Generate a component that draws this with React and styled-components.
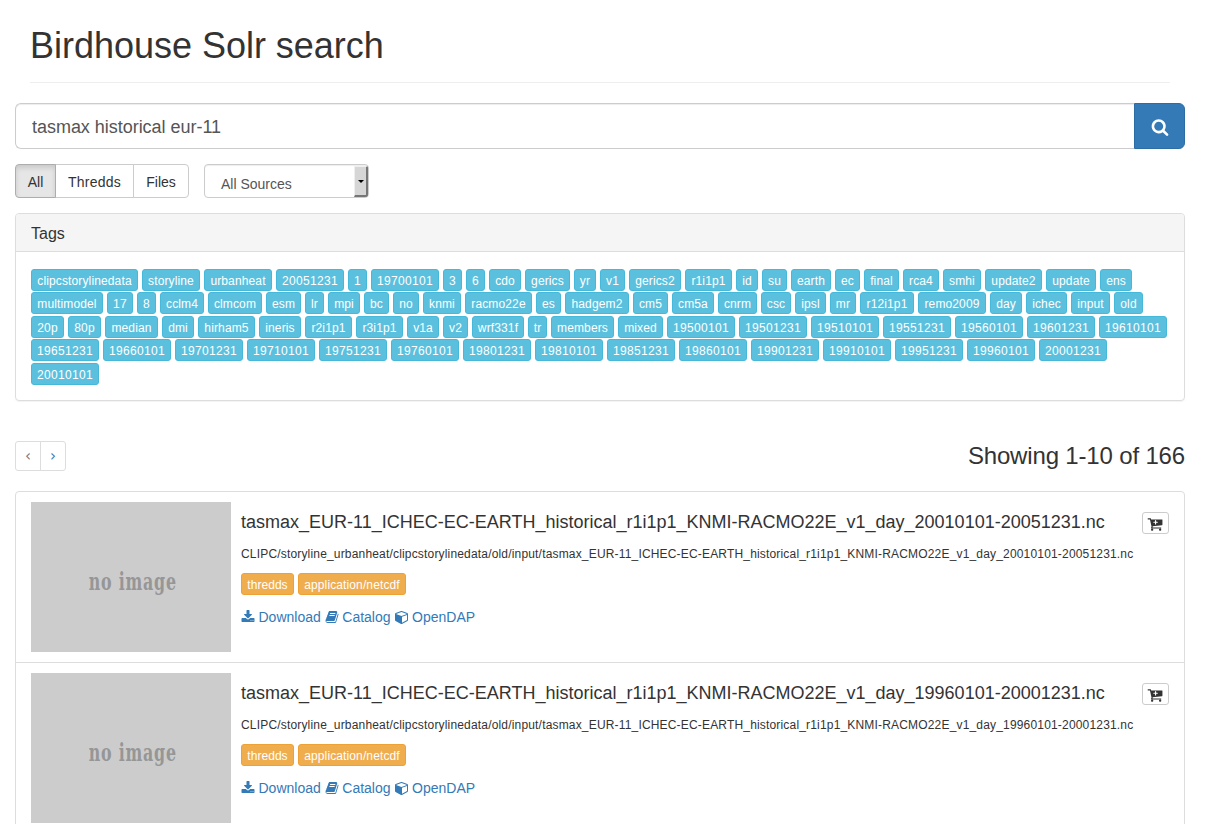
import React from "react";
import styled, { createGlobalStyle } from "styled-components";

const Global = createGlobalStyle`
  * { box-sizing: border-box; }
  body { margin: 0; background: #fff; color: #333; font: 14px/20px "Liberation Sans", Arial, sans-serif; height: 824px; overflow: hidden; }
`;
const Page = styled.main`width: 1200px; padding: 0 15px;`;
const Header = styled.header`margin: 0 15px 20px; height: 83px; padding-top: 26px; border-bottom: 1px solid #eee;`;
const Title = styled.h1`margin: 0; font-size: 36px; line-height: 40px; font-weight: 500; letter-spacing: -.02px;`;
const SearchBar = styled.form`display: flex; height: 46px;`;
const SearchInput = styled.input`
  flex: 1; min-width: 0; padding: 11px 16px 9px; border: 1px solid #ccc; border-right: 0; border-radius: 6px 0 0 6px;
  font: 18px "Liberation Sans", Arial, sans-serif; letter-spacing: -.03px; color: #555; box-shadow: inset 0 1px 1px rgba(0,0,0,.075); outline: 0;
`;
const SearchButton = styled.button`
  width: 51px; padding: 1px 0 0; border: 1px solid #2e6da4; border-radius: 0 6px 6px 0; background: #337ab7; color: #fff;
  display: flex; align-items: center; justify-content: center;
`;
const Filters = styled.div`display: flex; gap: 15px; margin: 15px 0;`;
const Segments = styled.div`display: flex; height: 34px;`;
const Segment = styled.button`
  width: ${p => p.$w}px; margin-left: -1px; padding: 2px 0 0; font: inherit; color: #333; letter-spacing: ${p => p.$tracking || 0}px;
  border: 1px solid ${p => (p.$active ? "#adadad" : "#ccc")}; background: ${p => (p.$active ? "#e6e6e6" : "#fff")};
  box-shadow: ${p => (p.$active ? "inset 0 3px 5px rgba(0,0,0,.125)" : "none")}; position: relative; z-index: ${p => (p.$active ? 1 : 0)};
  &:first-child { margin-left: 0; border-radius: 4px 0 0 4px; }
  &:last-child { border-radius: 0 4px 4px 0; }
`;
const Select = styled.div`
  display: flex; justify-content: space-between; width: 165px; height: 34px; border: 1px solid #ccc; border-radius: 4px;
  padding: 1px 0 0 16px; line-height: 36px; color: #555; box-shadow: inset 0 1px 1px rgba(0,0,0,.075); overflow: hidden;
`;
const Arrow = styled.span`
  width: 14px; height: 31px; background: #d6d6d6; border: solid; border-width: 1px 2px 2px 1px; border-color: #efefef #767676 #767676 #efefef;
  display: flex; align-items: center; justify-content: center;
  &::before { content: ""; border: 3px solid transparent; border-top-color: #000; border-bottom: 0; }
`;
const Panel = styled.section`border: 1px solid #ddd; border-radius: 4px; height: 188px; box-shadow: 0 1px 1px rgba(0,0,0,.05);`;
const PanelHead = styled.h3`
  margin: 0; height: 38px; padding: 11px 15px 0; font-size: 16px; line-height: 18px; font-weight: 500;
  background: #f5f5f5; border-bottom: 1px solid #ddd; border-radius: 3px 3px 0 0;
`;
const TagRows = styled.div`padding: 16.6px 15px; display: flex; flex-direction: column; gap: 1.5px;`;
const Row = styled.div`display: flex; gap: 4px;`;
const Tag = styled.button`
  display: flex; justify-content: center; flex: none; width: ${p => p.$w}px;
  height: 22px; padding: 1px 0 0; font: 12px/20px "Liberation Sans", Arial, sans-serif; letter-spacing: ${p => p.$tracking}px; color: #fff; white-space: nowrap;
  background: ${p => (p.$warn ? "#f0ad4e" : "#5bc0de")}; border: 1px solid ${p => (p.$warn ? "#eea236" : "#46b8da")}; border-radius: 3px;
`;
const ResultBar = styled.div`display: flex; justify-content: space-between; margin: 40px 0 20px; height: 30px;`;
const Pager = styled.nav`display: flex; width: 51px; border: 1px solid #ddd; border-radius: 3px;`;
const PageLink = styled.a`
  flex: 1; display: flex; align-items: center; justify-content: center; font: 15px "DejaVu Sans", sans-serif; color: ${p => (p.$muted ? "#777" : "#337ab7")};
  & + & { border-left: 1px solid #ddd; }
`;
const Count = styled.h2`margin: 1px 0 0; font-size: 24px; line-height: 28px; font-weight: 500; letter-spacing: -.16px;`;
const List = styled.ul`margin: 0; padding: 0; list-style: none; border: 1px solid #ddd; border-radius: 4px; overflow: hidden;`;
const Item = styled.li`display: flex; padding: 10px 15px; height: 171px; border-bottom: 1px solid #ddd;`;
const Thumb = styled.div`
  display: flex; justify-content: center; width: 200px; height: 150px; margin-right: 10px; padding-left: 3px; background: #ccc; color: #969696;
  font: bold 24px/160px "DejaVu Serif", serif; letter-spacing: 1.2px; white-space: nowrap;
  span { flex: none; transform: scaleX(.66); }
`;
const Body = styled.div`flex: 1; min-width: 0;`;
const ItemTitle = styled.h4`margin: 10px 0 13px; font-size: 18px; line-height: 20px; font-weight: 500; white-space: nowrap;`;
const Path = styled.p`margin: 0 0 10px; font-size: 12px; line-height: 18px; letter-spacing: .175px; white-space: nowrap;`;
const Links = styled.div`display: flex; gap: 4px; margin-top: 12px; color: #337ab7;`;
const Link = styled.a`display: flex; align-items: center; gap: 3.5px; svg { margin-top: -1px; }`;
const CartButton = styled.button`
  width: 27px; height: 22px; margin-top: 10px; padding: 2px 1px 0 0; background: #fff; border: 1px solid #ccc; border-radius: 3px; color: #333;
  display: flex; align-items: center; justify-content: center;
`;

const paths = {
  search: "M1216 832q0-185-131.5-316.5t-316.5-131.5-316.5 131.5-131.5 316.5 131.5 316.5 316.5 131.5 316.5-131.5 131.5-316.5zm512 832q0 52-38 90t-90 38q-54 0-90-38l-343-342q-179 124-399 124-143 0-273.5-55.5t-225-150-150-225-55.5-273.5 55.5-273.5 150-225 225-150 273.5-55.5 273.5 55.5 225 150 150 225 55.5 273.5q0 220-124 399l343 343q37 37 37 90z",
  download: "M1344 1344q0-26-19-45t-45-19-45 19-19 45 19 45 45 19 45-19 19-45zm256 0q0-26-19-45t-45-19-45 19-19 45 19 45 45 19 45-19 19-45zm128-224v320q0 40-28 68t-68 28h-1472q-40 0-68-28t-28-68v-320q0-40 28-68t68-28h465l135 136q58 56 136 56t136-56l136-136h464q40 0 68 28t28 68zm-325-569q17 41-14 70l-448 448q-18 19-45 19t-45-19l-448-448q-31-29-14-70 17-39 59-39h256v-448q0-26 19-45t45-19h256q26 0 45 19t19 45v448h256q42 0 59 39z",
  book: "M1703 478q40 57 18 129l-275 906q-19 64-76.5 107.5t-122.5 43.5h-923q-77 0-148.5-53.5t-99.5-131.5q-24-67-2-127 0-4 3-27t4-37q1-8-3-21.5t-3-19.5q2-11 8-21t16.5-23.5 16.5-23.5q23-38 45-91.5t30-91.5q3-10 .5-30t-.5-28q3-11 17-28t17-23q21-36 42-92t25-90q1-9-2.5-32t.5-28q4-13 22-30.5t22-22.5q19-26 42.5-84.5t27.5-96.5q1-8-3-25.5t-2-26.5q2-8 9-18t18-23 17-21q8-12 16.5-30.5t15-35 16-36 19.5-32 26.5-23.5 36-11.5 47.5 5.5l-1 3q38-9 51-9h761q74 0 114 56t18 130l-274 906q-36 119-71.5 153.5t-128.5 34.5h-869q-27 0-38 15-11 16-1 43 24 70 144 70h923q29 0 56-15.5t35-41.5l300-987q7-22 5-57 38 15 59 43zm-1064 2q-4 13 2 22.5t20 9.5h608q13 0 25.5-9.5t16.5-22.5l21-64q4-13-2-22.5t-20-9.5h-608q-13 0-25.5 9.5t-16.5 22.5zm-83 256q-4 13 2 22.5t20 9.5h608q13 0 25.5-9.5t16.5-22.5l21-64q4-13-2-22.5t-20-9.5h-608q-13 0-25.5 9.5t-16.5 22.5z",
  cube: "M896 1629l640-349v-636l-640 233v752zm-64-865l698-254-698-254-698 254 698 254zm832-252v768q0 35-18 65t-49 47l-704 384q-28 16-61 16t-61-16l-704-384q-31-17-49-47t-18-65v-768q0-40 23-73t61-47l704-256q22-8 44-8t44 8l704 256q38 14 61 47t23 73z",
  cart: "M1216 704q0-26-19-45t-45-19h-128v-128q0-26-19-45t-45-19-45 19-19 45v128h-128q-26 0-45 19t-19 45 19 45 45 19h128v128q0 26 19 45t45 19 45-19 19-45v-128h128q26 0 45-19t19-45zm-512 832q0 53-37.5 90.5t-90.5 37.5-90.5-37.5-37.5-90.5 37.5-90.5 90.5-37.5 90.5 37.5 37.5 90.5zm896 0q0 53-37.5 90.5t-90.5 37.5-90.5-37.5-37.5-90.5 37.5-90.5 90.5-37.5 90.5 37.5 37.5 90.5zm128-1088v512q0 24-16 42.5t-41 21.5l-1044 122q1 7 4.5 21.5t6 26.5 2.5 22q0 16-24 64h920q26 0 45 19t19 45-19 45-45 19h-1024q-26 0-45-19t-19-45q0-14 11-39.5t29.5-59.5 20.5-38l-177-823h-204q-26 0-45-19t-19-45 19-45 45-19h256q16 0 28.5 6.5t20 15.5 13 24.5 7.5 26.5 5.5 29.5 4.5 25.5h1201q26 0 45 19t19 45z",
};
const Icon = ({ name, size = 14 }) => (
  <svg width={size} height={size} viewBox="0 0 1792 1792" fill="currentColor"><path d={paths[name]} /></svg>
);

const rows = [
  "clipcstorylinedata:107 storyline:58 urbanheat:68 20051231:68 1:19 19700101:68 3:19 6:19 cdo:32 gerics:45 yr:22 v1:25 gerics2:52 r1i1p1:47 id:22 su:25 earth:40 ec:25 final:35 rca4:36 smhi:38 update2:57 update:50 ens:32",
  "multimodel:72 17:26 8:19 cclm4:44 clmcom:54 esm:35 lr:19 mpi:32 bc:25 no:26 knmi:38 racmo22e:67 es:25 hadgem2:64 cm5:35 cm5a:42 cnrm:39 csc:30 ipsl:31 mr:26 r12i1p1:54 remo2009:68 day:32 ichec:41 input:39 old:29",
  "20p:33 80p:33 median:53 dmi:32 hirham5:57 ineris:42 r2i1p1:47 r3i1p1:47 v1a:32 v2:25 wrf331f:52 tr:19 members:63 mixed:45 19500101:68 19501231:68 19510101:68 19551231:68 19560101:68 19601231:68 19610101:68",
  "19651231:68 19660101:68 19701231:68 19710101:68 19751231:68 19760101:68 19801231:68 19810101:68 19851231:68 19860101:68 19901231:68 19910101:68 19951231:68 19960101:68 20001231:68",
  "20010101:68",
].map(line => line.split(" ").map(entry => entry.split(":")));
const results = ["20010101-20051231", "19960101-20001231"];

export default function App() {
  return (
    <Page>
      <Global />
      <Header><Title>Birdhouse Solr search</Title></Header>
      <SearchBar>
        <SearchInput defaultValue="tasmax historical eur-11" />
        <SearchButton type="button"><Icon name="search" size={18} /></SearchButton>
      </SearchBar>
      <Filters>
        <Segments><Segment $w={41} $active>All</Segment><Segment $w={79} $tracking={0.25}>Thredds</Segment><Segment $w={56}>Files</Segment></Segments>
        <Select>All Sources<Arrow /></Select>
      </Filters>
      <Panel>
        <PanelHead>Tags</PanelHead>
        <TagRows>
          {rows.map((row, i) => (
            <Row key={i}>
              {row.map(([label, width]) => (
                <Tag key={label} $w={width} $tracking={/^\d+$/.test(label) ? 0.33 : 0.13}>{label}</Tag>
              ))}
            </Row>
          ))}
        </TagRows>
      </Panel>
      <ResultBar>
        <Pager><PageLink $muted>‹</PageLink><PageLink>›</PageLink></Pager>
        <Count>Showing 1-10 of 166</Count>
      </ResultBar>
      <List>
        {results.map(r => {
          const file = `tasmax_EUR-11_ICHEC-EC-EARTH_historical_r1i1p1_KNMI-RACMO22E_v1_day_${r}.nc`;
          return (
            <Item key={r}>
              <Thumb><span>no image</span></Thumb>
              <Body>
                <ItemTitle>{file}</ItemTitle>
                <Path>CLIPC/storyline_urbanheat/clipcstorylinedata/old/input/{file}</Path>
                <Row><Tag $warn $w={53} $tracking={0.05}>thredds</Tag><Tag $warn $w={108} $tracking={0.12}>application/netcdf</Tag></Row>
                <Links>
                  <Link><Icon name="download" />Download</Link>
                  <Link><Icon name="book" />Catalog</Link>
                  <Link><Icon name="cube" />OpenDAP</Link>
                </Links>
              </Body>
              <CartButton><Icon name="cart" size={16} /></CartButton>
            </Item>
          );
        })}
      </List>
    </Page>
  );
}
